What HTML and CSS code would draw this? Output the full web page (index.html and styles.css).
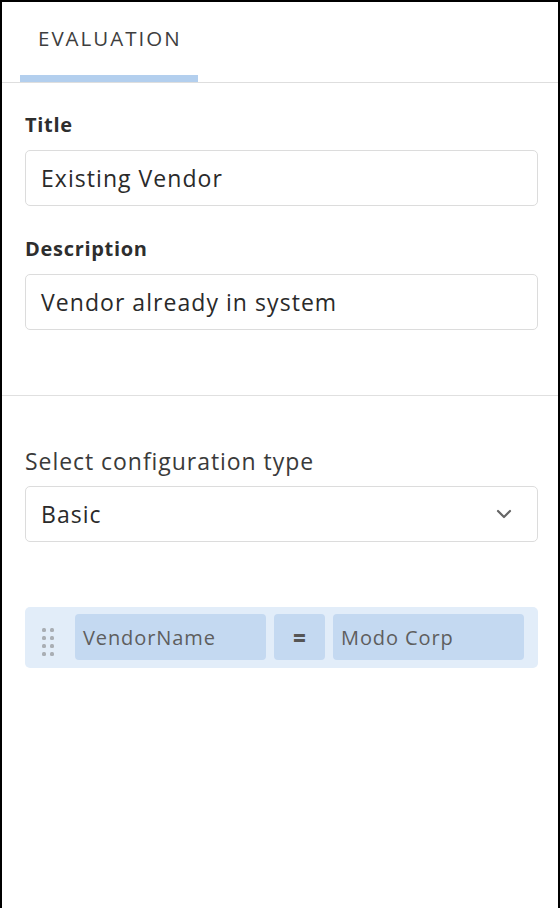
FILE: index.html
```html
<!DOCTYPE html>
<html lang="en">
<head>
<meta charset="utf-8">
<title>Evaluation</title>
<link rel="stylesheet" href="styles.css">
</head>
<body>
<div class="panel">
  <div class="tabs">
    <div class="tab active">EVALUATION</div>
  </div>
  <section class="section details">
    <label class="label">Title</label>
    <div class="field">Existing Vendor</div>
    <label class="label label-desc">Description</label>
    <div class="field">Vendor already in system</div>
  </section>
  <section class="section config">
    <div class="config-label">Select configuration type</div>
    <div class="select">
      <span class="select-value">Basic</span>
      <svg class="chevron" width="16" height="10" viewBox="0 0 16 10"><path d="M2 2 L8 8 L14 2" fill="none" stroke="#666" stroke-width="2.2" stroke-linecap="round" stroke-linejoin="round"/></svg>
    </div>
    <div class="rule">
      <div class="handle">
        <span></span><span></span><span></span><span></span>
        <span></span><span></span><span></span><span></span>
      </div>
      <div class="chip chip-field">VendorName</div>
      <div class="chip chip-op">=</div>
      <div class="chip chip-value">Modo Corp</div>
    </div>
  </section>
</div>
</body>
</html>
```

FILE: styles.css
```css
* { box-sizing: border-box; }
html, body { margin: 0; padding: 0; background: #fff; }
body {
  font-family: "Open Sans", "Liberation Sans", sans-serif;
  color: #333;
}
.panel {
  width: 560px;
  height: 908px;
  border-left: 2px solid #000;
  border-top: 2px solid #000;
  border-right: 2px solid #000;
  background: #fff;
}
.tabs {
  height: 81px;
  border-bottom: 1px solid #dedede;
  padding-left: 18px;
  display: flex;
}
.tab {
  width: 178px;
  height: 80px;
  padding-top: 23px;
  padding-left: 18px;
  font-size: 20.5px;
  line-height: 26px;
  letter-spacing: 2px;
  color: #3e3e3e;
  font-weight: 400;
}
.tab.active { border-bottom: 7px solid #b3cfee; }
.section {
  padding-left: 23px;
  padding-right: 20px;
  display: flex;
  flex-direction: column;
}
.details {
  padding-top: 30px;
  padding-bottom: 65px;
  border-bottom: 1px solid #e0e0e0;
}
.label {
  font-size: 20px;
  line-height: 24px;
  font-weight: 700;
  letter-spacing: 0.7px;
  color: #2e2e2e;
  margin-bottom: 13px;
}
.label-desc { margin-top: 31px; margin-bottom: 13px; }
.field, .select {
  height: 56px;
  border: 1px solid #dcdcdc;
  border-radius: 5px;
  padding: 0 15px;
  display: flex;
  align-items: center;
  font-size: 23px;
  letter-spacing: 1.05px;
  color: #2a2a2a;
}
.config { padding-top: 51px; }
.config-label {
  font-size: 23px;
  line-height: 28px;
  letter-spacing: 0.95px;
  color: #3a3a3a;
  margin-bottom: 11px;
}
.select { justify-content: space-between; padding-right: 25px; }
.chevron { display: block; }
.rule {
  margin-top: 65px;
  height: 61px;
  background: #e2edf9;
  border-radius: 5px;
  padding: 7px 14px 8px 17px;
  display: flex;
  align-items: stretch;
  gap: 8px;
}
.handle {
  width: 25px;
  padding: 14px 0 0 0;
  display: grid;
  grid-template-columns: 4px 4px;
  grid-auto-rows: 4px;
  column-gap: 4px;
  row-gap: 4px;
  align-content: start;
}
.handle span {
  width: 4px;
  height: 4px;
  border-radius: 1.5px;
  background: #a9aeb4;
}
.chip {
  background: #c4d9f1;
  border-radius: 4px;
  display: flex;
  align-items: center;
  font-size: 20px;
  letter-spacing: 0.9px;
  color: #5e5e5e;
}
.chip-field, .chip-value { width: 191px; padding-left: 8px; }
.chip-op {
  width: 51px;
  justify-content: center;
  font-weight: 800;
  font-size: 22px;
  color: #555;
  letter-spacing: 0;
}
```
